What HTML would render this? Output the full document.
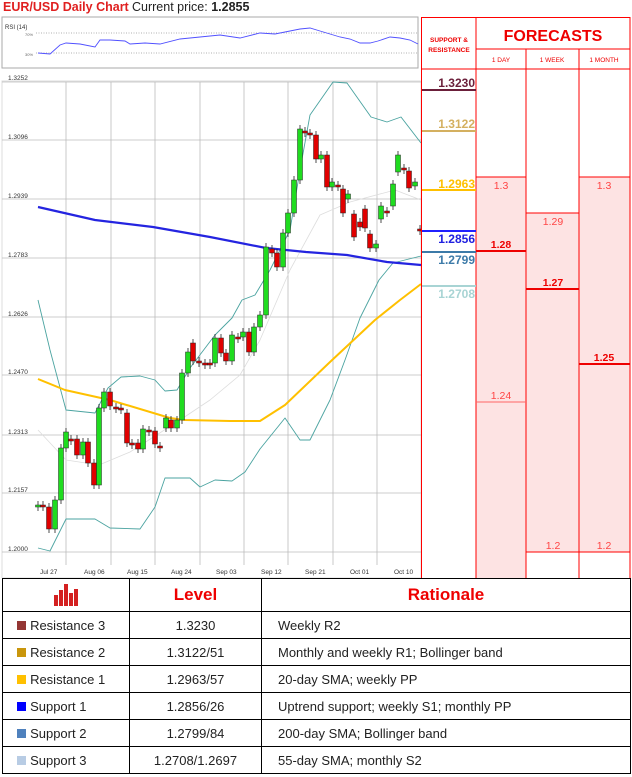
<!DOCTYPE html>
<html><head><meta charset="utf-8"><style>
body{margin:0;width:632px;height:777px;background:#fff;position:relative;overflow:hidden;font-family:"Liberation Sans",sans-serif}
.a{position:absolute}
svg{position:absolute;left:0;top:0}
.t{font-family:"Liberation Sans",sans-serif}
table{position:absolute;left:2px;top:578px;border-collapse:collapse;width:629px}
td{border:1.5px solid #000;font-size:13px;color:#222;height:26px;padding:0}
</style></head><body>
<div class="a" style="left:3px;top:0;font-size:12.5px;font-weight:bold;color:#e02020">EUR/USD Daily Chart</div>
<div class="a" style="left:132px;top:0;font-size:12.5px;color:#222">Current price: <b>1.2855</b></div>
<svg width="632" height="578" id="s">
<rect x="2" y="17" width="416" height="51" fill="#fff" stroke="#aaa"/>
<text x="5" y="29" font-size="6" fill="#333" class="t">RSI (14)</text>
<text x="25" y="36" font-size="4" fill="#666" class="t">70%</text>
<text x="25" y="56" font-size="4" fill="#666" class="t">30%</text>
<line x1="36" y1="33" x2="418" y2="33" stroke="#666" stroke-dasharray="1,1.5" stroke-width="0.6"/>
<line x1="36" y1="53" x2="418" y2="53" stroke="#666" stroke-dasharray="1,1.5" stroke-width="0.6"/>
<polyline fill="none" stroke="#5050ff" stroke-width="0.9" points="38,53 50,54 60,45 66,43 80,44 95,47 100,40 110,40 125,41 130,44 145,43 160,44 180,39 200,37 220,35 240,38 260,33 275,34 300,29 310,28 320,31 340,37 350,39 360,43 370,43 378,41 390,37 400,38 410,40 418,44"/>
<rect x="2" y="81" width="419" height="497" fill="#fff" stroke="#ddd"/>
<g id="grid"></g>
<g fill="none" stroke-linejoin="round">
<polyline stroke="#ddd" stroke-width="0.8" points="38,430 66,460 99,465 130,452 180,420 210,400 240,375 260,340 290,270 320,215 350,202 395,190 421,200"/>
<polyline stroke="#4aa3a0" stroke-width="0.9" points="38,300 50,350 66,410 95,413 108,388 121,377 140,376 155,380 165,391 177,390 190,368 215,335 232,318 242,300 255,295 270,270 290,230 300,170 310,115 333,82 347,83 371,117 387,122 401,117 421,143"/>
<polyline stroke="#4aa3a0" stroke-width="0.9" points="38,548 50,551 66,519 95,519 110,528 140,529 155,507 165,478 190,478 200,487 215,480 232,481 245,472 260,449 285,418 300,440 310,440 330,400 345,360 360,318 379,280 393,263 421,256"/>
<polyline stroke="#ffc000" stroke-width="2" points="38,379 65,390 110,400 170,418 185,420 230,421 260,421 285,405 330,362 375,320 400,300 421,284"/>
<polyline stroke="#2424e0" stroke-width="2.2" points="38,207 95,220 153,227 210,237 266,248 306,252 347,255 387,262 421,265"/>
</g>
<g id="c"></g>
<g class="t" font-size="6.5" fill="#333">
<text x="8" y="80">1.3252</text><text x="8" y="139">1.3096</text><text x="8" y="198">1.2939</text><text x="8" y="257">1.2783</text><text x="8" y="316">1.2626</text><text x="8" y="374">1.2470</text><text x="8" y="434">1.2313</text><text x="8" y="492">1.2157</text><text x="8" y="551">1.2000</text>
<text x="40" y="574">Jul 27</text><text x="84" y="574">Aug 06</text><text x="127" y="574">Aug 15</text><text x="171" y="574">Aug 24</text><text x="216" y="574">Sep 03</text><text x="261" y="574">Sep 12</text><text x="305" y="574">Sep 21</text><text x="350" y="574">Oct 01</text><text x="394" y="574">Oct 10</text>
</g>
<rect x="421" y="17" width="55" height="561" fill="#fff"/>
<rect x="476" y="177" width="50" height="401" fill="#fde3e3"/>
<rect x="526" y="213" width="53" height="339" fill="#fde3e3"/>
<rect x="579" y="177" width="51" height="375" fill="#fde3e3"/>
<g stroke="#f00" stroke-width="1">
<line x1="421.5" y1="17" x2="421.5" y2="578"/><line x1="476" y1="17" x2="476" y2="578"/><line x1="526" y1="49" x2="526" y2="578"/><line x1="579" y1="49" x2="579" y2="578"/><line x1="630" y1="17" x2="630" y2="578"/>
<line x1="421" y1="17.5" x2="630" y2="17.5"/><line x1="476" y1="49" x2="630" y2="49"/><line x1="421" y1="69" x2="630" y2="69"/>
<line x1="476" y1="177" x2="526" y2="177"/><line x1="579" y1="177" x2="630" y2="177"/><line x1="526" y1="213" x2="579" y2="213"/>
<line x1="476" y1="402" x2="526" y2="402" stroke="#f66"/><line x1="526" y1="552" x2="630" y2="552"/>
</g>
<g stroke="#e00" stroke-width="2"><line x1="476" y1="251" x2="526" y2="251"/><line x1="526" y1="289" x2="579" y2="289"/><line x1="579" y1="364" x2="630" y2="364"/></g>
<g stroke-width="2">
<line x1="422" y1="90" x2="476" y2="90" stroke="#6b1f3a"/>
<line x1="422" y1="131" x2="476" y2="131" stroke="#d4b060"/>
<line x1="422" y1="190" x2="476" y2="190" stroke="#ffc000"/>
<line x1="422" y1="231" x2="476" y2="231" stroke="#2020ff"/>
<line x1="422" y1="252" x2="476" y2="252" stroke="#3c7aa8"/>
<line x1="422" y1="286" x2="476" y2="286" stroke="#a8d4d4"/>
</g>
<g class="t" font-size="12" font-weight="600" text-anchor="end">
<text x="475" y="87" fill="#6b1f3a">1.3230</text>
<text x="475" y="128" fill="#d4b060">1.3122</text>
<text x="475" y="188" fill="#ffc000">1.2963</text>
<text x="475" y="243" fill="#2020e0">1.2856</text>
<text x="475" y="264" fill="#3c7aa8">1.2799</text>
<text x="475" y="298" fill="#a8d4d4">1.2708</text>
</g>
<g class="t" fill="#e00" text-anchor="middle">
<text x="449" y="42" font-size="6.5" font-weight="bold">SUPPORT &amp;</text>
<text x="449" y="52" font-size="6.5" font-weight="bold">RESISTANCE</text>
<text x="553" y="41" font-size="16" font-weight="bold">FORECASTS</text>
<text x="501" y="62" font-size="6.5">1 DAY</text><text x="552" y="62" font-size="6.5">1 WEEK</text><text x="604" y="62" font-size="6.5">1 MONTH</text>
<g font-size="10.5" fill="#f44"><text x="501" y="189">1.3</text><text x="604" y="189">1.3</text><text x="553" y="225">1.29</text><text x="501" y="399">1.24</text><text x="553" y="549">1.2</text><text x="604" y="549">1.2</text></g>
<g font-size="10.5" font-weight="bold" fill="#e00"><text x="501" y="248">1.28</text><text x="553" y="286">1.27</text><text x="604" y="361">1.25</text></g>
</g>
</svg>
<table>
<tr style="height:33px"><td style="width:126px;text-align:center"><svg width="26" height="22" style="position:relative;vertical-align:middle"><g fill="#d42020"><rect x="1" y="11" width="4" height="11"/><rect x="6" y="6" width="4" height="16"/><rect x="11" y="0" width="4" height="22"/><rect x="16" y="9" width="4" height="13"/><rect x="21" y="5" width="4" height="17"/></g></svg></td><td style="width:131px;text-align:center;font-weight:bold;color:#e00;font-size:17px">Level</td><td style="text-align:center;font-weight:bold;color:#e00;font-size:17px">Rationale</td></tr>
<tr style="height:27px"><td>&nbsp;&nbsp;&nbsp;&nbsp;<span style="display:inline-block;width:9px;height:9px;background:#943634"></span>&nbsp;Resistance 3</td><td style="text-align:center">1.3230</td><td style="padding-left:16px">Weekly R2</td></tr>
<tr style="height:27px"><td>&nbsp;&nbsp;&nbsp;&nbsp;<span style="display:inline-block;width:9px;height:9px;background:#c9960c"></span>&nbsp;Resistance 2</td><td style="text-align:center">1.3122/51</td><td style="padding-left:16px">Monthly and weekly R1; Bollinger band</td></tr>
<tr style="height:27px"><td>&nbsp;&nbsp;&nbsp;&nbsp;<span style="display:inline-block;width:9px;height:9px;background:#ffc000"></span>&nbsp;Resistance 1</td><td style="text-align:center">1.2963/57</td><td style="padding-left:16px">20-day SMA; weekly PP</td></tr>
<tr style="height:27px"><td>&nbsp;&nbsp;&nbsp;&nbsp;<span style="display:inline-block;width:9px;height:9px;background:#0000ff"></span>&nbsp;Support 1</td><td style="text-align:center">1.2856/26</td><td style="padding-left:16px">Uptrend support; weekly S1; monthly PP</td></tr>
<tr style="height:27px"><td>&nbsp;&nbsp;&nbsp;&nbsp;<span style="display:inline-block;width:9px;height:9px;background:#4f81bd"></span>&nbsp;Support 2</td><td style="text-align:center">1.2799/84</td><td style="padding-left:16px">200-day SMA; Bollinger band</td></tr>
<tr style="height:27px"><td>&nbsp;&nbsp;&nbsp;&nbsp;<span style="display:inline-block;width:9px;height:9px;background:#b8cce4"></span>&nbsp;Support 3</td><td style="text-align:center">1.2708/1.2697</td><td style="padding-left:16px">55-day SMA; monthly S2</td></tr>
</table>
<script>
var NS="http://www.w3.org/2000/svg";
function el(p,n,a){var e=document.createElementNS(NS,n);for(var k in a)e.setAttribute(k,a[k]);p.appendChild(e);return e;}
var g=document.getElementById("grid");
[82,140,199,258,317,375,435,493,552].forEach(function(y){el(g,"line",{x1:2,x2:421,y1:y,y2:y,stroke:"#bbb","stroke-width":0.8});});
[66,111,155,200,244,288,333,377].forEach(function(x){el(g,"line",{x1:x,x2:x,y1:82,y2:565,stroke:"#bbb","stroke-width":0.8});});
var C=[[38,506,505],[43,505,506],[49,507,529],[55,529,500],[61,500,448],[66,448,432],[71,439,440],[77,439,455],[83,455,442],[88,442,463],[94,463,485],[99,485,408],[104,408,392],[110,392,406],[116,407,408],[121,408,409],[127,413,443],[132,443,444],[138,443,449],[143,449,429],[149,430,431],[155,431,444],[160,446,448],[166,428,418],[171,420,428],[177,428,420],[182,420,373],[188,373,352],[193,343,361],[199,361,363],[205,363,364],[210,363,364],[215,363,338],[221,338,353],[226,353,361],[232,361,335],[238,337,338],[243,337,332],[249,332,352],[254,352,327],[260,327,315],[266,315,247],[272,249,253],[277,253,267],[283,267,233],[288,233,213],[294,213,180],[300,180,129],[305,131,133],[310,133,135],[316,135,159],[321,159,155],[327,155,187],[332,187,182],[338,185,187],[343,189,213],[348,199,194],[354,214,237],[360,222,227],[365,209,228],[370,234,248],[376,248,244],[381,219,206],[387,211,213],[393,206,184],[398,172,155],[404,168,170],[409,171,188],[415,186,182],[420,229,231]];
var cg=document.getElementById("c");
C.forEach(function(c){var up=c[2]<c[1];var t=Math.min(c[1],c[2]),b=Math.max(c[1],c[2]);if(b-t<2)b=t+2;
el(cg,"line",{x1:c[0],x2:c[0],y1:t-4,y2:b+4,stroke:"#222","stroke-width":0.8});
el(cg,"rect",{x:c[0]-2.5,y:t,width:5,height:b-t,fill:up?"#1fdc1f":"#e00000",stroke:"#222","stroke-width":0.5});});
</script>
</body></html>
